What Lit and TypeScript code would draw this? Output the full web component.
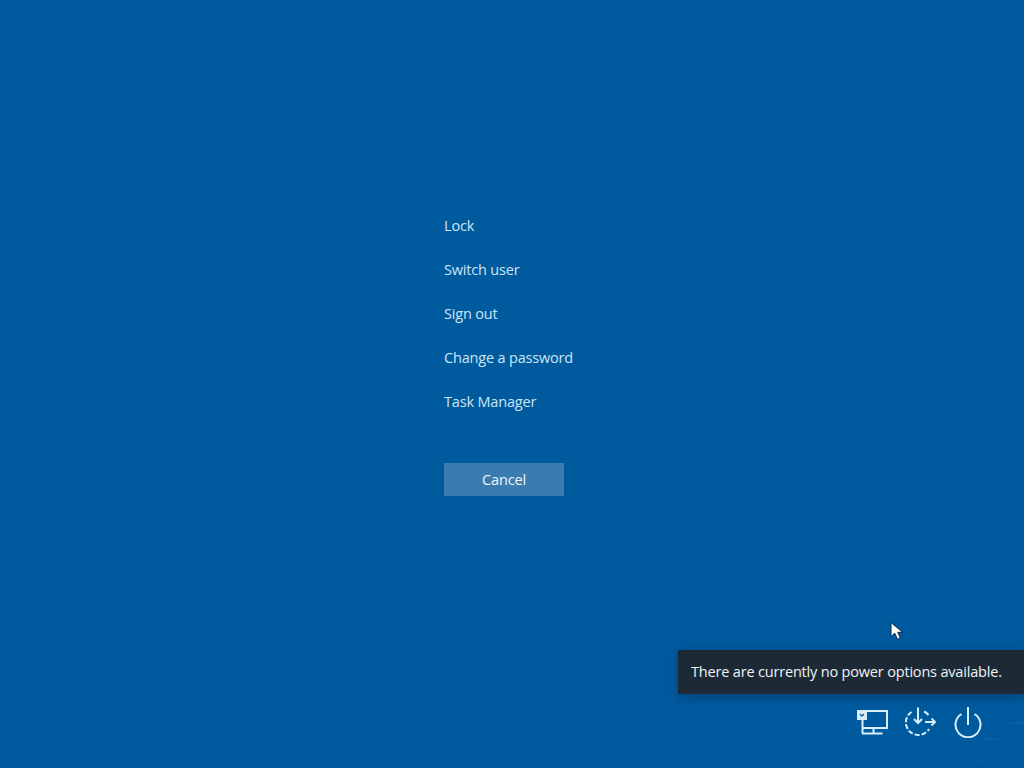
import { LitElement, html, css } from "lit";
import { customElement } from "lit/decorators.js";

@customElement("app-root")
export class AppRoot extends LitElement {
  static styles = css`
    :host {
      display: block;
      width: 1024px;
      height: 768px;
      overflow: hidden;
      background: #005a9e;
      font-family: "Open Sans", "Noto Sans", sans-serif;
      font-size: 14.5px;
    }
    .screen {
      position: relative;
      width: 1024px;
      height: 768px;
      display: flex;
      flex-direction: column;
    }
    .menu {
      display: flex;
      flex-direction: column;
      align-items: flex-start;
      padding: 204px 0 0 444px;
    }
    .item {
      height: 44px;
      line-height: 44px;
      color: #cde6f8;
      letter-spacing: -0.18px;
      white-space: nowrap;
    }
    .cancel {
      margin-top: 39px;
      width: 120px;
      height: 33px;
      border: 0;
      padding: 0;
      background: #3b7cb0;
      color: #f0f6fb;
      font: inherit;
      letter-spacing: -0.18px;
    }
    .tools {
      margin-top: auto;
      display: flex;
      justify-content: flex-end;
      gap: 15px;
      padding: 0 41px 30px 0;
    }
    .tools svg {
      display: block;
      fill: none;
      stroke: #d8eefa;
      stroke-width: 2;
    }
    .badge {
      fill: #d8eefa;
    }
    .check {
      stroke: #005a9e;
    }
    .tip {
      position: absolute;
      left: 678px;
      top: 650px;
      box-sizing: border-box;
      width: 346px;
      height: 44px;
      padding-left: 13px;
      line-height: 43px;
      background: #1d2a35;
      color: #f0f3f5;
      letter-spacing: -0.18px;
      white-space: nowrap;
      box-shadow: 0 3px 10px rgba(0, 30, 60, 0.4);
    }
    .cursor {
      position: absolute;
      left: 890px;
      top: 621px;
    }
    .specks {
      position: absolute;
      left: 975px;
      top: 720px;
      stroke: #2f7fb8;
      stroke-width: 1;
      stroke-dasharray: 1 2;
      fill: none;
    }
  `;

  render() {
    const items = ["Lock", "Switch user", "Sign out", "Change a password", "Task Manager"];
    return html`<div class="screen">
      <div class="menu">
        ${items.map((t) => html`<div class="item">${t}</div>`)}
        <button class="cancel">Cancel</button>
      </div>

      <div class="tools">
        <svg width="32" height="32" viewBox="0 0 32 32">
          <path d="M10 5H31V22H7M17.5 22V27M6 27.5H26.5M6.5 14V27.5"/>
          <path class="badge" d="M2 5H10V13H2Z"/>
          <path class="check" d="M4 8L6 10L8 8" stroke-width="1.3"/>
        </svg>
        <svg width="35" height="32" viewBox="0 0 35 32">
          <path d="M15 1.5V17M11 13L15 17L19 13"/>
          <path d="M8.5 6A12.5 12.5 0 1 0 26 23" stroke-dasharray="5 2"/>
          <path d="M21 5.5A12.5 12.5 0 0 1 25.5 9"/>
          <path d="M22 16H32M28.5 12.5L32 16L28.5 19.5"/>
        </svg>
        <svg width="30" height="32" viewBox="0 0 30 32">
          <path d="M15 1V19"/>
          <path d="M8.5 8A12.5 12.5 0 1 0 21.5 8"/>
        </svg>
      </div>

      <div class="tip">There are currently no power options available.</div>

      <svg class="cursor" width="14" height="20" viewBox="0 0 14 20">
        <path d="M1 1.5V15.5L4.8 12.3L7.5 18.3L10.3 17L7.8 11.3H12.7Z" fill="#fff" stroke="#0b2240" stroke-width="1"/>
      </svg>

      <svg class="specks" width="49" height="48" viewBox="0 0 49 48">
        <path d="M35 3H48M10 19H23M3 32H10M2 42H8"/>
      </svg>
    </div>`;
  }
}
